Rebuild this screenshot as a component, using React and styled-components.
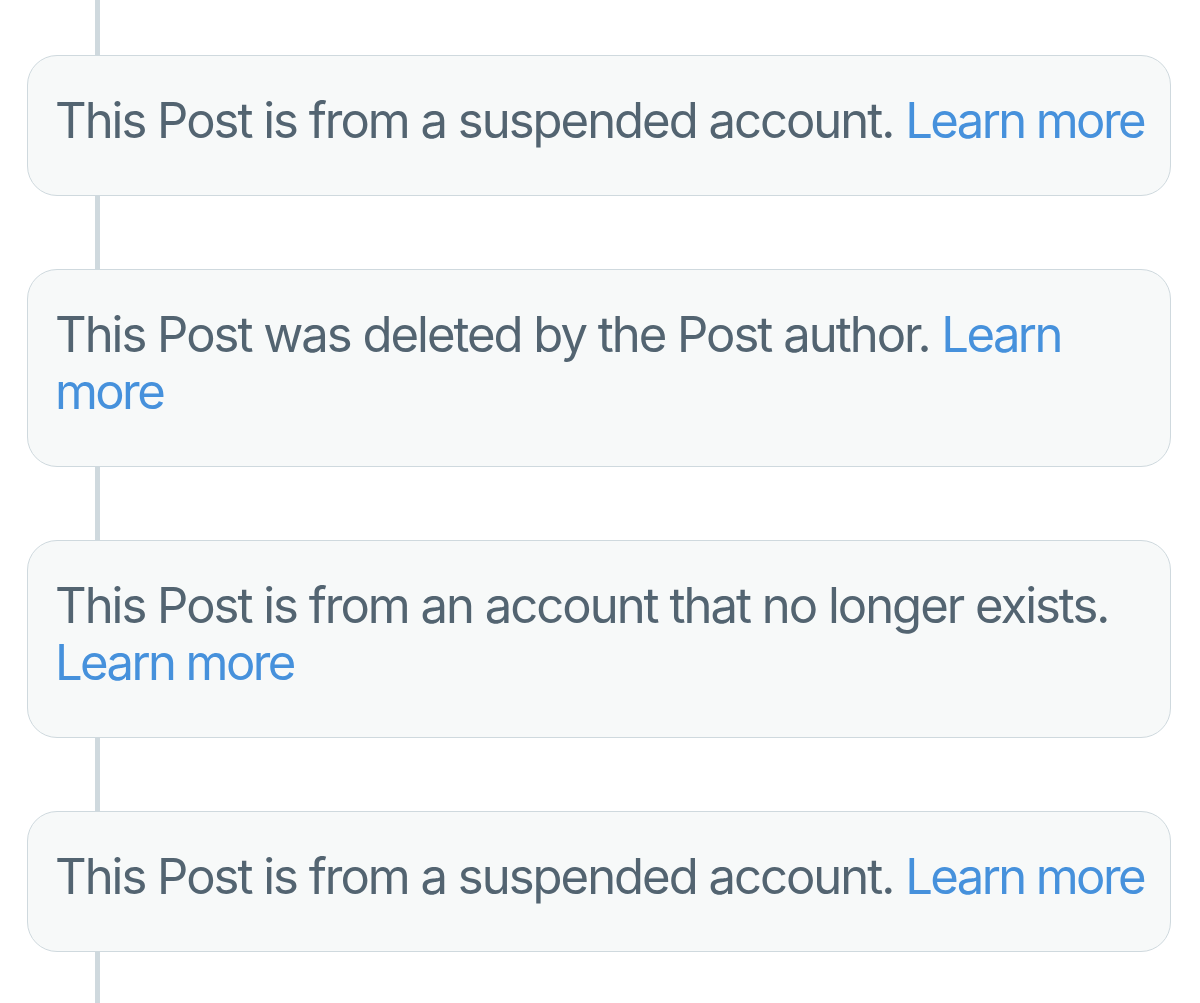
import React from "react";
import styled, { createGlobalStyle } from "styled-components";

const GlobalStyle = createGlobalStyle`
  html, body {
    margin: 0;
    padding: 0;
    background: #ffffff;
  }
  body {
    font-family: Inter, "Noto Sans", "Liberation Sans", sans-serif;
  }
`;

const notices = [
  { id: 1, text: "This Post is from a suspended account." },
  { id: 2, text: "This Post was deleted by the Post author." },
  { id: 3, text: "This Post is from an account that no longer exists." },
  { id: 4, text: "This Post is from a suspended account." },
];

const App = () => {
  return (
    <>
      <GlobalStyle />
      <Thread>
        <Connector height={55} />
        {notices.map((n, i) => (
          <React.Fragment key={n.id}>
            <Notice>
              <p>
                {n.text} <a href="#">Learn more</a>
              </p>
            </Notice>
            <Connector height={i === notices.length - 1 ? 60 : 73} />
          </React.Fragment>
        ))}
      </Thread>
    </>
  );
};

const Thread = styled.div`
  display: flex;
  flex-direction: column;
  padding: 0 29px 0 27px;
  height: 1003px;
  overflow: hidden;
  box-sizing: border-box;
`;

const Connector = styled.div`
  flex: none;
  height: ${(p) => p.height}px;
  width: 5px;
  margin-left: 68px;
  background: #cfd9de;
`;

const Notice = styled.div`
  flex: none;
  box-sizing: border-box;
  background: #f7f9f9;
  border: 1.5px solid #cfd9de;
  border-radius: 30px;
  padding: 36px 20px 46px 27px;
  p {
    margin: 0;
    font-size: 49px;
    line-height: 57px;
    letter-spacing: -2px;
    color: #536471;
  }
  a {
    color: #4691dc;
    text-decoration: none;
    letter-spacing: -2.6px;
  }
`;

export default App;
